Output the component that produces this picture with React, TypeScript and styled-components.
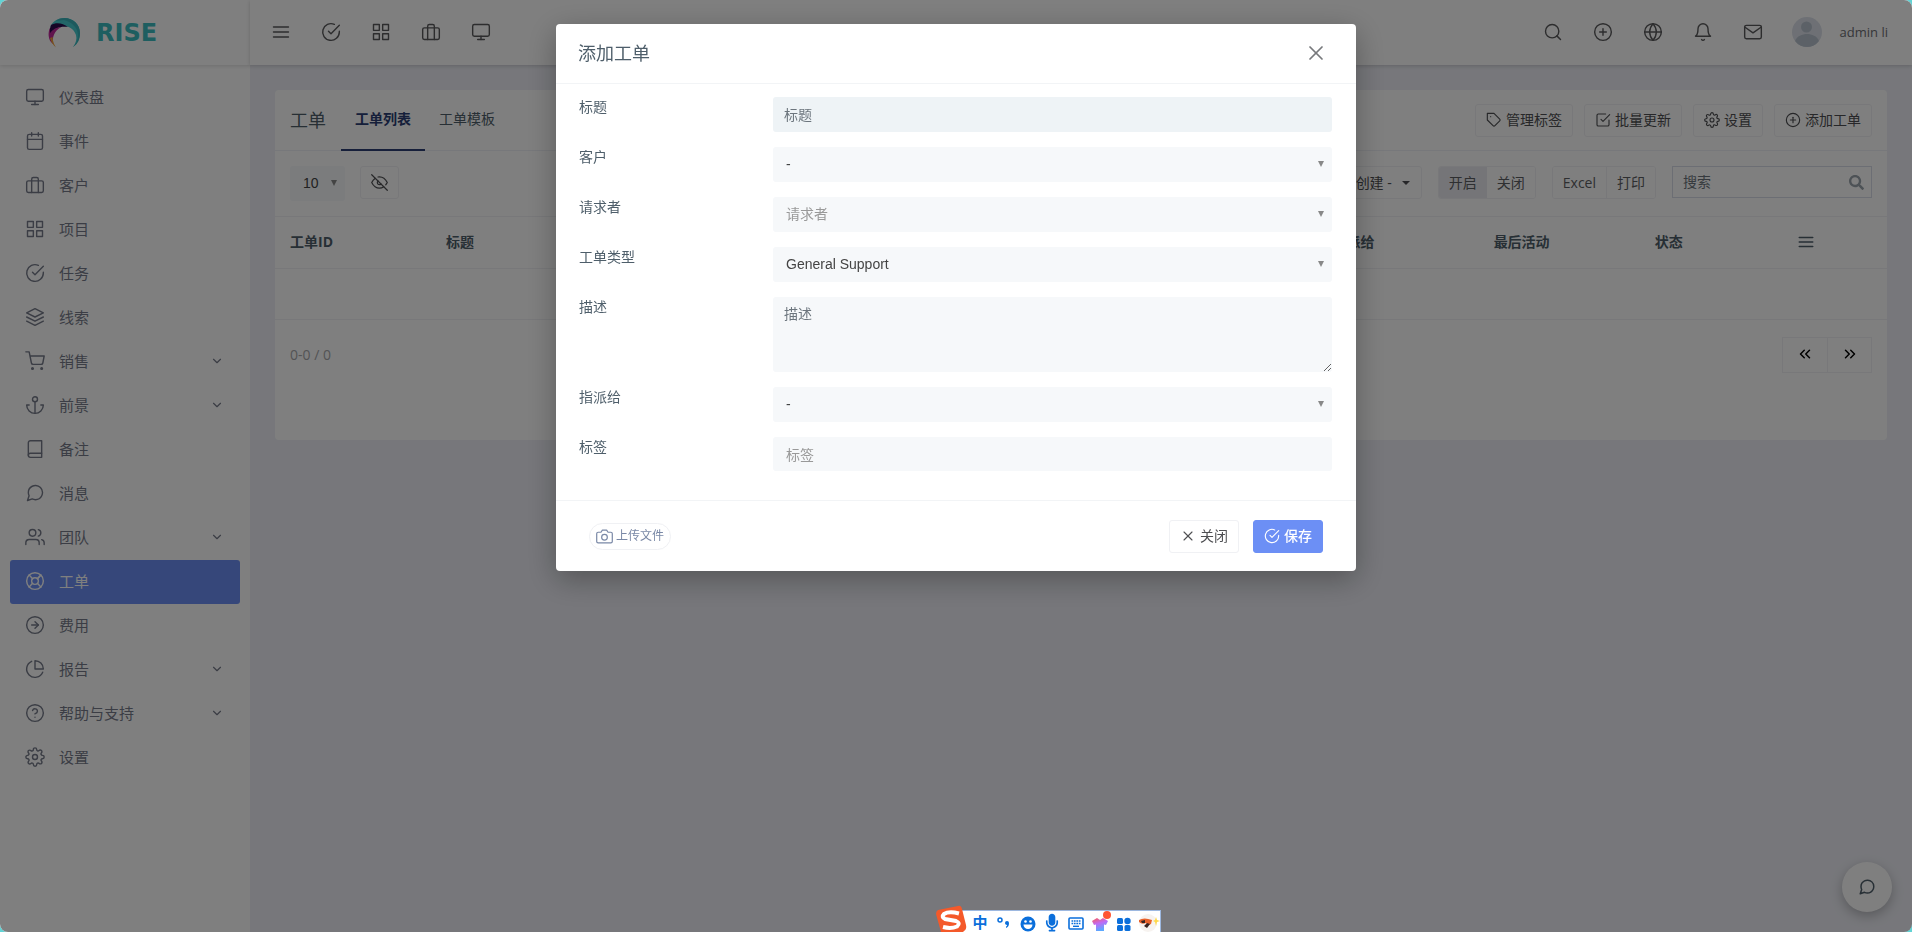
import React from "react";
import styled, { createGlobalStyle, css } from "styled-components";
import type { IconType } from "react-icons";
import {
  FiAnchor, FiArrowRightCircle, FiBell, FiBook, FiBriefcase, FiCalendar, FiCamera, FiCheckCircle,
  FiCheckSquare, FiChevronDown, FiChevronsLeft, FiChevronsRight, FiEyeOff, FiGlobe, FiGrid, FiHelpCircle,
  FiLayers, FiLifeBuoy, FiMail, FiMenu, FiMessageCircle, FiMonitor, FiPieChart, FiPlusCircle, FiSearch,
  FiSettings, FiShoppingCart, FiTag, FiUsers, FiX,
} from "react-icons/fi";
import { FaMicrophone, FaSearch } from "react-icons/fa";

const GlobalStyle = createGlobalStyle`
  *, *::before, *::after { box-sizing: border-box; }
  body {
    margin: 0;
    background: #62d3d4;
    color: #4e5e6a;
    font: 14px/20px "Open Sans", "Noto Sans CJK SC", sans-serif;
  }
  button, input, select, textarea { font: inherit; color: inherit; margin: 0; }
  button { cursor: pointer; }
  a { color: inherit; text-decoration: none; }
  svg { flex: none; }
`;

const Page = styled.div`
  display: flex;
  min-height: 100vh;
  border-radius: 8px;
  overflow: hidden;
  background: #eeeff6;
`;

const Sidebar = styled.aside`
  flex: none;
  width: 250px;
  background: #fff;
`;

const Brand = styled.a`
  display: flex;
  align-items: center;
  gap: 15px;
  height: 65px;
  padding-left: 48px;
  box-shadow: 0 1px 4px rgba(0, 0, 0, 0.14);
  color: #3cbcc0;
  font: bold 24px/30px "DejaVu Sans", sans-serif;
`;

const NavList = styled.ul`
  list-style: none;
  margin: 0;
  padding: 11px 10px;
`;

const NavLink = styled.a<{ $active?: boolean }>`
  display: flex;
  align-items: center;
  gap: 14px;
  height: 44px;
  padding: 0 16px 2px 15px;
  border-radius: 3px;
  font-size: 15px;
  color: ${(p) => (p.$active ? "#fff" : "#767b8a")};
  background: ${(p) => (p.$active ? "#6c8ff5" : "transparent")};
  span { flex: 1; }
`;

const Main = styled.div`
  flex: 1;
  min-width: 0;
`;

const Topbar = styled.header`
  display: flex;
  align-items: center;
  justify-content: space-between;
  height: 65px;
  padding: 0 24px 2px 6px;
  background: #fff;
  box-shadow: 0 1px 4px rgba(0, 0, 0, 0.18);
`;

const TopGroup = styled.div`
  display: flex;
  align-items: center;
`;

const TopButton = styled.button`
  display: grid;
  place-items: center;
  width: 50px;
  height: 50px;
  padding: 0;
  border: 0;
  background: none;
  color: #5a5a5c;
`;

const UserLink = styled.a`
  display: flex;
  align-items: center;
  gap: 18px;
  margin-left: 14px;
  font-size: 13px;
  color: #6c6e74;
`;

const Card = styled.section`
  margin: 25px;
  min-height: 350px;
  border-radius: 4px;
  background: #fff;
`;

const CardHead = styled.div`
  display: flex;
  height: 61px;
  padding: 0 15px;
  border-bottom: 1px solid #eff1f6;
`;

const CardTitle = styled.h1`
  margin: 0 15px 0 0;
  font-size: 18px;
  font-weight: 400;
  line-height: 60px;
`;

const Tab = styled.a<{ $active?: boolean }>`
  height: 61px;
  padding: 0 14px;
  line-height: 58px;
  ${(p) =>
    p.$active &&
    css`
      font-weight: 700;
      color: #2c3f75;
      border-bottom: 2px solid #2c3f75;
    `}
`;

const HeadActions = styled.div`
  display: flex;
  align-items: center;
  gap: 11px;
  margin-left: auto;
`;

const Button = styled.button<{ $primary?: boolean }>`
  display: inline-flex;
  align-items: center;
  justify-content: center;
  gap: 4px;
  height: 33px;
  padding: 0 10px;
  border: 1px solid ${(p) => (p.$primary ? "#6c8ff5" : "#f0f1f4")};
  border-radius: 3px;
  background: ${(p) => (p.$primary ? "#6c8ff5" : "#fff")};
  color: ${(p) => (p.$primary ? "#fff" : "#4e4f52")};
  font-weight: ${(p) => (p.$primary ? 500 : 400)};
`;

const FilterRow = styled.div`
  display: flex;
  align-items: flex-start;
  height: 65px;
  padding: 15px;
`;

const FilterEnd = styled.div`
  display: flex;
  align-items: flex-start;
  gap: 16px;
  margin-left: auto;
`;

const EyeButton = styled(Button)`
  width: 39px;
  margin-left: 15px;
`;

const Caret = styled.i`
  margin: 0 1px 0 6px;
  border: 4px solid transparent;
  border-top-color: currentColor;
  border-bottom: 0;
`;

const ButtonGroup = styled.div`
  display: flex;
  border: 1px solid #f0f1f4;
  border-radius: 3px;
  overflow: hidden;
`;

const GroupButton = styled.button<{ $active?: boolean; $divided?: boolean }>`
  height: 31px;
  padding: 0 10px;
  border: 0;
  border-left: ${(p) => (p.$divided ? "1px solid #f0f1f4" : "0")};
  background: ${(p) => (p.$active ? "#ebebf1" : "#fff")};
  color: #5c5e62;
`;

const SearchBox = styled.label`
  display: flex;
  align-items: center;
  width: 200px;
  height: 32px;
  padding: 0 7px 0 10px;
  border: 1px solid #d9dde9;
  color: #9ba4ad;
  input {
    flex: 1;
    min-width: 0;
    padding: 0;
    border: 0;
    outline: 0;
    background: none;
  }
  input::placeholder { color: #6c757d; opacity: 1; }
`;

const Table = styled.table`
  width: 100%;
  table-layout: fixed;
  border-collapse: collapse;
  text-align: left;
  th, td {
    padding: 0 15px;
    border: solid #f0f1f4;
    border-width: 1px 0;
  }
  th { height: 52px; padding-bottom: 2px; font-weight: 700; }
  td { height: 51px; }
  th:last-child { text-align: center; }
  th svg { display: block; margin: 0 auto; }
`;

const CardFoot = styled.div`
  display: flex;
  justify-content: space-between;
  align-items: center;
  padding: 17px 15px;
  color: #a6a7aa;
`;

const Pager = styled(ButtonGroup)`
  border-radius: 0;
  button {
    display: grid;
    place-items: center;
    width: 44px;
    height: 34px;
    padding: 0 0 2px;
    color: #000;
  }
`;

const ChatButton = styled.button`
  position: fixed;
  right: 20px;
  bottom: 20px;
  display: grid;
  place-items: center;
  width: 50px;
  height: 50px;
  padding: 0;
  border: 0;
  border-radius: 50%;
  background: #fff;
  color: #4e5e6a;
  box-shadow: 0 4px 12px rgba(0, 0, 0, 0.25);
`;

const Backdrop = styled.div`
  position: fixed;
  inset: 0;
  padding: 24px;
  border-radius: 8px;
  overflow: hidden;
  background: rgba(0, 0, 0, 0.5);
`;

const Dialog = styled.form`
  width: 100%;
  max-width: 800px;
  margin: 0 auto;
  border-radius: 4px;
  background: #fff;
  box-shadow: 0 8px 30px rgba(0, 0, 0, 0.3);
`;

const DialogHead = styled.header`
  display: flex;
  align-items: center;
  justify-content: space-between;
  height: 60px;
  padding: 0 28px 2px 22px;
  border-bottom: 1px solid #f2f4f6;
  h2 { margin: 0; font-size: 18px; font-weight: 400; }
`;

const CloseButton = styled.button`
  display: grid;
  padding: 0;
  border: 0;
  background: none;
  color: #77797c;
`;

const DialogBody = styled.div`
  display: grid;
  gap: 15px;
  padding: 13px 24px 29px 23px;
`;

const Field = styled.div`
  display: grid;
  grid-template-columns: 194px 1fr;
  align-items: start;
`;

const fieldBox = css`
  display: block;
  width: 100%;
  height: 35px;
  padding: 0 11px;
  border: 0;
  border-radius: 3px;
  outline: 0;
  background: #f6f8fa;
`;

const TextInput = styled.input<{ $focused?: boolean; $muted?: boolean }>`
  ${fieldBox}
  ${(p) => p.$focused && "background: #eef3f6;"}
  ${(p) => p.$muted && "height: 34px; padding: 0 13px;"}
  &::placeholder { color: ${(p) => (p.$muted ? "#999" : "#6c757d")}; opacity: 1; }
`;

const TextArea = styled.textarea`
  ${fieldBox}
  height: 75px;
  padding: 7px 11px;
  resize: vertical;
  &::placeholder { color: #6c757d; opacity: 1; }
`;

const SelectWrap = styled.div<{ $compact?: boolean }>`
  position: relative;
  width: ${(p) => (p.$compact ? "55px" : "auto")};
  &::after {
    content: "";
    position: absolute;
    top: 14px;
    right: 8px;
    border: 3px solid transparent;
    border-top: 6px solid #888;
    border-bottom: 0;
    pointer-events: none;
  }
`;

const SelectBox = styled.select<{ $muted?: boolean }>`
  ${fieldBox}
  appearance: none;
  padding: 0 13px 2px;
  color: ${(p) => (p.$muted ? "#999" : "#444")};
  font-family: "Liberation Sans", "Noto Sans CJK SC", sans-serif;
`;

const DialogFoot = styled.footer`
  display: flex;
  align-items: center;
  justify-content: space-between;
  height: 71px;
  padding: 0 33px;
  border-top: 1px solid #f2f4f6;
`;

const FootActions = styled.div`
  display: flex;
  gap: 14px;
  button { width: 70px; }
`;

const UploadButton = styled.button`
  display: flex;
  align-items: center;
  gap: 3px;
  height: 27px;
  padding: 0 6px;
  border: 1px solid #f0f1f4;
  border-radius: 14px;
  background: #fff;
  color: #7988a6;
  font-size: 12px;
`;

const ImeBar = styled.div`
  position: fixed;
  left: 50%;
  bottom: 0;
  margin-left: -8px;
  display: flex;
  align-items: center;
  width: 213px;
  height: 22px;
  padding-left: 19px;
  border: 1px solid #9db8e0;
  border-bottom: 0;
  background: #fff;
  color: #0b6fdb;
  b {
    width: 24px;
    text-align: center;
    font: 700 15px/20px "Noto Sans CJK SC", sans-serif;
  }
  > svg { width: 24px; height: 20px; }
`;

const ImeLogo = styled.svg`
  position: fixed;
  left: 50%;
  bottom: 0;
  margin-left: -21px;
`;

const STROKE = 1.7;

const navItems: { icon: IconType; label: string; more?: boolean; active?: boolean }[] = [
  { icon: FiMonitor, label: "仪表盘" },
  { icon: FiCalendar, label: "事件" },
  { icon: FiBriefcase, label: "客户" },
  { icon: FiGrid, label: "项目" },
  { icon: FiCheckCircle, label: "任务" },
  { icon: FiLayers, label: "线索" },
  { icon: FiShoppingCart, label: "销售", more: true },
  { icon: FiAnchor, label: "前景", more: true },
  { icon: FiBook, label: "备注" },
  { icon: FiMessageCircle, label: "消息" },
  { icon: FiUsers, label: "团队", more: true },
  { icon: FiLifeBuoy, label: "工单", active: true },
  { icon: FiArrowRightCircle, label: "费用" },
  { icon: FiPieChart, label: "报告", more: true },
  { icon: FiHelpCircle, label: "帮助与支持", more: true },
  { icon: FiSettings, label: "设置" },
];

const shortcuts: [IconType, string][] = [
  [FiMenu, "菜单"], [FiCheckCircle, "任务"], [FiGrid, "项目"], [FiBriefcase, "客户"], [FiMonitor, "仪表盘"],
];

const tools: [IconType, string][] = [
  [FiSearch, "搜索"], [FiPlusCircle, "添加"], [FiGlobe, "语言"], [FiBell, "通知"], [FiMail, "消息"],
];

const headActions: [IconType, string][] = [
  [FiTag, "管理标签"], [FiCheckSquare, "批量更新"], [FiSettings, "设置"], [FiPlusCircle, "添加工单"],
];

const columns: [string, string | undefined][] = [
  ["工单ID", "156px"], ["标题", undefined], ["客户", "12%"], ["项目", "12%"], ["工单类型", "12%"],
  ["指派给", "10%"], ["最后活动", "10%"], ["状态", "86px"],
];

function BrandMark() {
  return (
    <svg width="33" height="32" viewBox="0 0 33 32" aria-hidden="true">
      <path d="M2 10C5 4 10 1 16.500 1C25 1 32 7.500 32 16C32 22 29 27 25 30C28 26 29 22 28 18C26 12 21 9 15 9C9 8 5 8 2 10Z" fill="#46ccd0" />
      <path d="M16 3C24 5 30 11 30 18C30 23 28 27 25 30C30 27 32 22 32 16C32 7.500 25 1 16.500 1C13 1 10 2 8 4Z" fill="#3bb3ba" />
      <path d="M3 8C8 5 15 6 20 10C13 9 6 11 2 17Q1 12 3 8Z" fill="#2b0b4d" />
      <path d="M2 11C0 15 0 21 3 25L5 27C4 21 6 14 13 10C9 10 5 12 2 16Z" fill="#c0289a" />
      <path d="M2 21C3 25 5 28 8 30.500C6 27 5 25 4.500 20Z" fill="#f0a23c" />
    </svg>
  );
}

function Avatar() {
  return (
    <svg width="30" height="30" viewBox="0 0 30 30" aria-hidden="true">
      <circle cx="15" cy="15" r="15" fill="#dce1ea" />
      <circle cx="14.500" cy="10" r="5.500" fill="#b9c3cf" />
      <path d="M3 24C5 19 10 17 15 17S25 19 27 24A15 15 0 0 1 3 24Z" fill="#b9c3cf" />
    </svg>
  );
}

function SelectField(props: { id: string; value: string; muted?: boolean }) {
  return (
    <SelectWrap>
      <SelectBox id={props.id} $muted={props.muted} defaultValue={props.value}>
        <option>{props.value}</option>
      </SelectBox>
    </SelectWrap>
  );
}

function InputMethodBar() {
  return (
    <>
      <ImeBar>
        <b>中</b>
        <svg viewBox="0 0 24 20" aria-hidden="true">
          <circle cx="8" cy="8" r="2" fill="none" stroke="currentColor" strokeWidth="1.500" />
          <path d="M13 11a2 2 0 1 1 4 0c0 3-1 4-3 5v-1.500c1-.5 1-1 1-1.500-1 0-2-.8-2-2z" fill="currentColor" />
        </svg>
        <svg viewBox="0 0 24 20" aria-hidden="true">
          <circle cx="12" cy="12" r="7.500" fill="currentColor" />
          <circle cx="9.500" cy="9.500" r="1.300" fill="#fff" />
          <circle cx="14.500" cy="9.500" r="1.300" fill="#fff" />
          <path d="M7.500 12.500h9a4.500 4.500 0 0 1-9 0z" fill="#fff" />
        </svg>
        <FaMicrophone viewBox="-80 -50 512 580" />
        <svg viewBox="0 0 24 20" aria-hidden="true">
          <rect x="5" y="6" width="14" height="11" rx="1" fill="none" stroke="currentColor" strokeWidth="1.600" />
          <path d="M7.500 9h9M7.500 11.500h9" stroke="currentColor" strokeWidth="1.600" strokeDasharray="1.700 0.730" />
          <path d="M9 14.300h6" stroke="currentColor" strokeWidth="1.400" />
        </svg>
        <svg viewBox="0 0 24 20" overflow="visible" aria-hidden="true">
          <defs>
            <linearGradient id="shirt" x1="0" y1="0" x2="0.4" y2="1">
              <stop offset="0" stopColor="#ff5a4e" />
              <stop offset="0.5" stopColor="#c06af5" />
              <stop offset="1" stopColor="#5aa8ff" />
            </linearGradient>
          </defs>
          <path d="M9 6l3 2 3-2 5 3-2 4-2-.5V19H8v-6.500L6 13 4 9z" fill="url(#shirt)" />
          <circle cx="19" cy="3" r="4" fill="#ff5533" />
        </svg>
        <svg viewBox="0 0 24 20" fill="currentColor" aria-hidden="true">
          <rect x="5" y="6" width="6" height="6" rx="1.500" />
          <circle cx="15.500" cy="9" r="3.200" />
          <rect x="5" y="13" width="6" height="6" rx="1.500" />
          <rect x="12.500" y="13" width="6" height="6" rx="1.500" />
        </svg>
        <svg viewBox="0 0 24 20" aria-hidden="true">
          <circle cx="12" cy="11" r="9" fill="#f7f3f0" />
          <path d="M3 8q5-3 13 0l-1 4q-3 2-5-1-4 2-7-1z" fill="#e8622b" />
          <path d="M5 9l4-1v3H6zM11 11l3 1-3 4-3-2z" fill="#3a2320" />
          <path d="M20 5l1 3 3 1-3 1-1 4-1-4-2-1 2-1z" fill="#ffd84a" />
        </svg>
      </ImeBar>
      <ImeLogo width="33" height="27" viewBox="0 0 33 27" aria-hidden="true">
        <path d="M3 5L23 1Q26 0 27 4L31 20Q32 24 29 26L28 27H6L1 9Q1 6 3 5Z" fill="#f4592a" />
        <path d="M24 8.500Q14 6 9 9Q6 12 10 14L21 16Q26 18 22 21.500Q16 24 8 22" fill="none" stroke="#fff" strokeWidth="4" />
      </ImeLogo>
    </>
  );
}

export default function App() {
  return (
    <>
      <GlobalStyle />
      <Page>
        <Sidebar>
          <Brand href="#home">
            <BrandMark />
            RISE
          </Brand>
          <nav>
            <NavList>
              {navItems.map(({ icon: Icon, label, more, active }) => (
                <li key={label}>
                  <NavLink href="#nav" $active={active} aria-current={active ? "page" : undefined}>
                    <Icon size={20} strokeWidth={STROKE} />
                    <span>{label}</span>
                    {more && <FiChevronDown size={14} />}
                  </NavLink>
                </li>
              ))}
            </NavList>
          </nav>
        </Sidebar>
        <Main>
          <Topbar>
            <TopGroup>
              {shortcuts.map(([Icon, label]) => (
                <TopButton key={label} aria-label={label}>
                  <Icon size={20} strokeWidth={STROKE} />
                </TopButton>
              ))}
            </TopGroup>
            <TopGroup>
              {tools.map(([Icon, label]) => (
                <TopButton key={label} aria-label={label}>
                  <Icon size={20} strokeWidth={STROKE} />
                </TopButton>
              ))}
              <UserLink href="#profile">
                <Avatar />
                admin li
              </UserLink>
            </TopGroup>
          </Topbar>
          <Card>
            <CardHead>
              <CardTitle>工单</CardTitle>
              <Tab href="#list" $active>工单列表</Tab>
              <Tab href="#templates">工单模板</Tab>
              <HeadActions>
                {headActions.map(([Icon, label]) => (
                  <Button key={label}>
                    <Icon size={16} strokeWidth={STROKE} />
                    {label}
                  </Button>
                ))}
              </HeadActions>
            </CardHead>
            <FilterRow>
              <SelectWrap $compact>
                <SelectBox aria-label="每页行数" defaultValue="10">
                  <option>10</option>
                </SelectBox>
              </SelectWrap>
              <EyeButton aria-label="显示列">
                <FiEyeOff size={17} strokeWidth={STROKE} />
              </EyeButton>
              <FilterEnd>
                <Button>
                  创建 -<Caret />
                </Button>
                <ButtonGroup>
                  <GroupButton $active>开启</GroupButton>
                  <GroupButton>关闭</GroupButton>
                </ButtonGroup>
                <ButtonGroup>
                  <GroupButton>Excel</GroupButton>
                  <GroupButton $divided>打印</GroupButton>
                </ButtonGroup>
                <SearchBox>
                  <input type="search" placeholder="搜索" aria-label="搜索" />
                  <FaSearch size={15} />
                </SearchBox>
              </FilterEnd>
            </FilterRow>
            <Table>
              <colgroup>
                {columns.map(([label, width]) => (
                  <col key={label} width={width} />
                ))}
                <col width="10%" />
              </colgroup>
              <thead>
                <tr>
                  {columns.map(([label]) => (
                    <th key={label} scope="col">{label}</th>
                  ))}
                  <th scope="col" aria-label="操作">
                    <FiMenu size={18} />
                  </th>
                </tr>
              </thead>
              <tbody>
                <tr>
                  <td colSpan={9} />
                </tr>
              </tbody>
            </Table>
            <CardFoot>
              0-0 / 0
              <Pager>
                <GroupButton aria-label="上一页">
                  <FiChevronsLeft size={18} />
                </GroupButton>
                <GroupButton aria-label="下一页" $divided>
                  <FiChevronsRight size={18} />
                </GroupButton>
              </Pager>
            </CardFoot>
          </Card>
        </Main>
        <ChatButton aria-label="聊天">
          <FiMessageCircle size={18} />
        </ChatButton>
      </Page>

      <Backdrop>
        <Dialog role="dialog" aria-modal="true" aria-labelledby="dialog-title">
          <DialogHead>
            <h2 id="dialog-title">添加工单</h2>
            <CloseButton type="button" aria-label="关闭">
              <FiX size={24} strokeWidth={STROKE} />
            </CloseButton>
          </DialogHead>
          <DialogBody>
            <Field>
              <label htmlFor="title">标题</label>
              <TextInput id="title" placeholder="标题" $focused />
            </Field>
            <Field>
              <label htmlFor="client">客户</label>
              <SelectField id="client" value="-" />
            </Field>
            <Field>
              <label htmlFor="requester">请求者</label>
              <SelectField id="requester" value="请求者" muted />
            </Field>
            <Field>
              <label htmlFor="type">工单类型</label>
              <SelectField id="type" value="General Support" />
            </Field>
            <Field>
              <label htmlFor="description">描述</label>
              <TextArea id="description" placeholder="描述" />
            </Field>
            <Field>
              <label htmlFor="assignee">指派给</label>
              <SelectField id="assignee" value="-" />
            </Field>
            <Field>
              <label htmlFor="labels">标签</label>
              <TextInput id="labels" placeholder="标签" $muted />
            </Field>
          </DialogBody>
          <DialogFoot>
            <UploadButton type="button">
              <FiCamera size={17} strokeWidth={STROKE} />
              上传文件
            </UploadButton>
            <FootActions>
              <Button type="button">
                <FiX size={16} strokeWidth={STROKE} />
                关闭
              </Button>
              <Button type="submit" $primary>
                <FiCheckCircle size={16} strokeWidth={STROKE} />
                保存
              </Button>
            </FootActions>
          </DialogFoot>
        </Dialog>
      </Backdrop>
      <InputMethodBar />
    </>
  );
}
